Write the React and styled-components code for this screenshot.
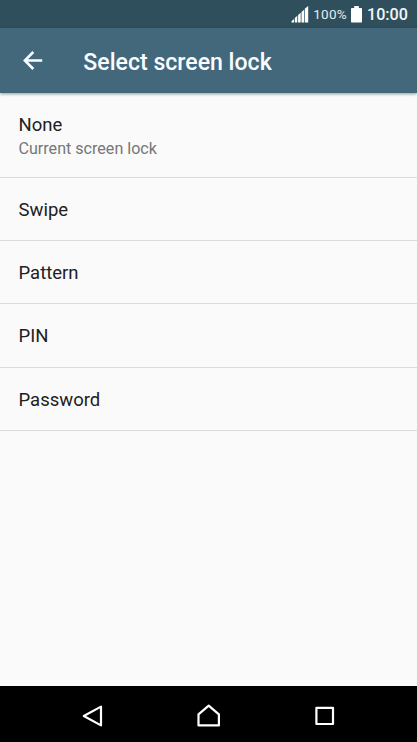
import React from 'react';
import styled, { createGlobalStyle } from 'styled-components';

const GlobalStyle = createGlobalStyle`
  * { box-sizing: border-box; }
  body { margin: 0; background: #fafafa; font-family: Roboto, "Noto Sans", sans-serif; }
`;

const Screen = styled.div`
  display: flex;
  flex-direction: column;
  width: 100%;
  height: 100vh;
  overflow: hidden;
  background: #fafafa;
`;

const StatusBar = styled.header`
  display: flex;
  flex: none;
  align-items: center;
  justify-content: flex-end;
  height: 28px;
  padding: 1px 9.5px 0 0;
  background: #304f5c;
  color: #f2f6f7;
`;

const BatteryLevel = styled.span`
  margin: 0 4px 2px 4px;
  font-size: 13.5px;
  letter-spacing: 0.3px;
  line-height: 20px;
  color: #e4ecef;
`;

const Clock = styled.time`
  width: 40.5px;
  margin-left: 5px;
  padding-top: 1px;
  font-size: 16.1px;
  font-weight: 500;
  line-height: 20px;
  white-space: nowrap;
`;

const AppBar = styled.div`
  display: flex;
  flex: none;
  align-items: center;
  height: 65px;
  padding-left: 18.5px;
  background: #44687b;
  color: #fafdff;
  box-shadow: 0 1px 3px rgba(0, 0, 0, 0.4);
  z-index: 1;
`;

const BackButton = styled.button`
  display: flex;
  padding: 0;
  border: 0;
  background: none;
  color: inherit;
`;

const Title = styled.h1`
  margin: 4px 0 0 36.8px;
  font-size: 23.1px;
  font-weight: 500;
  line-height: 28px;
`;

const LockList = styled.ul`
  flex: 1;
  margin: 0;
  padding: 0;
  list-style: none;
`;

const LockItem = styled.li`
  display: flex;
  flex-direction: column;
  justify-content: center;
  height: ${({ $tall }) => ($tall ? '85px' : '63.2px')};
  padding: 2px 18.5px 0;
  border-bottom: 1px solid #dcdcdc;
`;

const ItemLabel = styled.span`
  font-size: 18.5px;
  line-height: 24px;
  color: #212121;
`;

const ItemSummary = styled.span`
  font-size: 16.1px;
  line-height: 23px;
  color: #777;
`;

const NavBar = styled.nav`
  display: flex;
  flex: none;
  justify-content: center;
  align-items: center;
  gap: 84px;
  height: 56px;
  padding: 3px 1px 0 0;
  background: #000;
`;

const NavButton = styled.button`
  display: flex;
  padding: 0;
  border: 0;
  background: none;
  color: #fff;
`;

const options = [
  { label: 'None', summary: 'Current screen lock' },
  { label: 'Swipe' },
  { label: 'Pattern' },
  { label: 'PIN' },
  { label: 'Password' },
];

const navShapes = [
  { name: 'Back', d: 'M7.8 16 L25 6.6 V25.4 Z' },
  { name: 'Home', d: 'M6.5 25.4 V14.4 L16.7 5.7 L26.9 14.4 V25.4 Z' },
  { name: 'Recent apps', d: 'M8.4 7.8 H25 V24 H8.4 Z' },
];

function SignalIcon() {
  return (
    <svg width="18" height="17" viewBox="0 0 18 17" fill="#fff">
      <path d="M0.5 16.5V15.2L3 13V16.5ZM3.8 16.5V12L6.3 9.8V16.5ZM7.1 16.5V9L9.7 6.8V16.5ZM10.5 16.5V6L13.1 3.7V16.5Z" />
      <path d="M13.8 16.5V2.8L17.2 0V16.5Z" />
    </svg>
  );
}

function BatteryIcon() {
  return (
    <svg width="11" height="18" viewBox="0 0 11 18" fill="#fff">
      <path d="M3.2 0H7.8V2H10.2Q11 2 11 2.8V15.7Q11 16.5 10.2 16.5H0.8Q0 16.5 0 15.7V2.8Q0 2 0.8 2H3.2Z" />
    </svg>
  );
}

export default function App() {
  return (
    <Screen>
      <GlobalStyle />
      <StatusBar>
        <SignalIcon />
        <BatteryLevel>100%</BatteryLevel>
        <BatteryIcon />
        <Clock>10:00</Clock>
      </StatusBar>
      <AppBar>
        <BackButton aria-label="Back">
          <svg width="28" height="28" viewBox="0 0 28 28" fill="none" stroke="currentColor" strokeWidth="2.5">
            <path d="M23.2 13.5H6M14.3 5L5.8 13.5L14.3 22" />
          </svg>
        </BackButton>
        <Title>Select screen lock</Title>
      </AppBar>
      <LockList>
        {options.map(({ label, summary }) => (
          <LockItem key={label} $tall={Boolean(summary)}>
            <ItemLabel>{label}</ItemLabel>
            {summary && <ItemSummary>{summary}</ItemSummary>}
          </LockItem>
        ))}
      </LockList>
      <NavBar>
        {navShapes.map(({ name, d }) => (
          <NavButton key={name} aria-label={name}>
            <svg width="32" height="32" viewBox="0 0 32 32" fill="none" stroke="currentColor" strokeWidth="2.2" strokeLinejoin="round">
              <path d={d} />
            </svg>
          </NavButton>
        ))}
      </NavBar>
    </Screen>
  );
}
